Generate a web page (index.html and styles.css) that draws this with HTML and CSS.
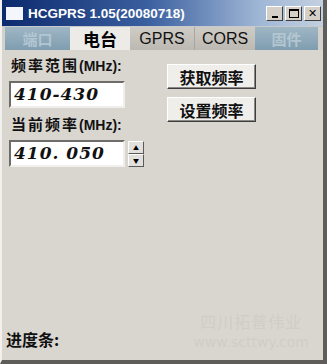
FILE: index.html
```html
<!DOCTYPE html>
<html>
<head>
<meta charset="utf-8">
<link rel="stylesheet" href="styles.css">
</head>
<body>
<div class="window">
  <div class="titlebar">
    <span class="appicon"></span>
    <span class="title">HCGPRS 1.05(20080718)</span>
    <div class="ctrls">
      <span class="cbtn"><span class="min"></span></span>
      <span class="cbtn"><span class="max"></span></span>
      <span class="cbtn close">✕</span>
    </div>
  </div>
  <div class="tabs">
    <span class="tab blue">端口</span>
    <span class="tab sel">电台</span>
    <span class="tab grey">GPRS</span>
    <span class="tab grey">CORS</span>
    <span class="tab blue">固件</span>
  </div>
  <div class="content">
    <div class="left">
      <div class="label">频率范围<span class="mhz">(MHz):</span></div>
      <div class="field">410-430</div>
      <div class="label l2">当前频率<span class="mhz">(MHz):</span></div>
      <div class="row">
        <div class="field">410. 050</div>
        <div class="spin">
          <span class="arr">▲</span>
          <span class="arr">▼</span>
        </div>
      </div>
    </div>
    <div class="right">
      <div class="btn">获取频率</div>
      <div class="btn">设置频率</div>
    </div>
  </div>
  <div class="bottom">
    <div class="progress">进度条:</div>
    <div class="wm">
      <div class="wm1">四川拓普伟业</div>
      <div class="wm2">www.scttwy.com</div>
    </div>
  </div>
</div>
</body>
</html>
```
FILE: styles.css
```css
* { box-sizing: border-box; }
html, body { margin: 0; padding: 0; }
body { width: 327px; height: 364px; overflow: hidden; background: #d8d5cf; font-family: "Noto Sans CJK SC", "Liberation Sans", sans-serif; }
.window { width: 327px; height: 364px; background: #d9d6d0; border-right: 4px solid #5e5d5a; border-bottom: 4px solid #5e5d5a; border-left: 2px solid #f2f1ee; display: flex; flex-direction: column; }
.titlebar { height: 27px; background: linear-gradient(90deg, #0c2a6e 0%, #3a5f9f 45%, #9fb7d6 80%, #c3d0e0 100%); display: flex; align-items: center; padding-left: 4px; padding-right: 2px; border-bottom: 1px solid #c7c9cc; }
.appicon { width: 17px; height: 13px; background: #f4f6fb; margin-right: 5px; margin-top: 1px; }
.title { color: #fff; font-family: "Liberation Sans", sans-serif; font-weight: bold; font-size: 13.5px; flex: 1; }
.ctrls { display: flex; gap: 2px; margin-top: 1px; }
.cbtn { width: 17px; height: 15px; background: #d4d0c8; border: 1px solid; border-color: #fff #404040 #404040 #fff; display: flex; align-items: center; justify-content: center; font-size: 11px; font-weight: bold; color: #000; }
.cbtn.close { font-family: "DejaVu Sans", sans-serif; font-size: 11px; }
.min { width: 6px; height: 2px; background: #000; margin-top: 7px; }
.max { width: 10px; height: 9px; border: 1px solid #000; border-top-width: 2px; }
.tabs { height: 23px; display: flex; padding-left: 3px; background: #d3d1cc; }
.tab { display: flex; align-items: center; justify-content: center; font-size: 14px; height: 23px; }
.tab:nth-child(1) { width: 65px; }
.tab:nth-child(2) { width: 60px; }
.tab:nth-child(3) { width: 64px; }
.tab:nth-child(4) { width: 61px; }
.tab:nth-child(5) { width: 63px; }
.tab.blue { background: linear-gradient(#9fb6c4, #7f9db0); color: #b3c6d2; font-weight: bold; font-size: 15px; }
.tab.sel { background: #ecebe8; color: #000; font-size: 17px; font-weight: bold; }
.tab.grey { background: linear-gradient(#cfccc6, #bcb9b3); color: #111; font-family: "Liberation Sans", sans-serif; font-size: 16px; }
.tab.grey + .tab.grey { border-left: 1px solid #a8a6a1; }
.content { display: flex; padding: 5px 0 0 7px; }
.left { width: 150px; display: flex; flex-direction: column; }
.label { font-size: 15px; font-weight: bold; color: #111; height: 20px; line-height: 20px; padding-left: 2px; letter-spacing: 2px; white-space: nowrap; }
.mhz { font-family: "Liberation Sans", sans-serif; font-size: 14px; font-weight: bold; letter-spacing: 0; }
.l2 { margin-top: 6px; }
.field { width: 116px; height: 27px; background: #fff; border: 2px solid; border-color: #6d6c69 #f0efec #f0efec #6d6c69; font-family: "DejaVu Serif", serif; font-style: italic; font-weight: bold; font-size: 17px; line-height: 22px; padding-left: 3px; margin-top: 6px; color: #111; letter-spacing: 1px; }
.row { display: flex; align-items: flex-start; }
.spin { display: flex; flex-direction: column; margin-left: 3px; margin-top: 7px; }
.arr { width: 16px; height: 13px; background: #e2e0dc; border: 1px solid; border-color: #fff #5a5a5a #5a5a5a #fff; font-size: 6px; display: flex; align-items: center; justify-content: center; color: #000; }
.right { display: flex; flex-direction: column; gap: 8px; margin-left: 8px; margin-top: 9px; }
.btn { width: 89px; height: 25px; background: #efeeeb; border: 1px solid; border-color: #fff #3e3e3e #3e3e3e #fff; box-shadow: inset -1px -1px 0 #8a8986; font-size: 16px; font-weight: bold; display: flex; align-items: center; justify-content: center; color: #111; }
.bottom { flex: 1; display: flex; align-items: flex-end; justify-content: space-between; padding: 0 14px 9px 4px; }
.progress { font-size: 16px; font-weight: bold; color: #111; }
.wm { color: #d0cdc8; text-align: center; margin-bottom: 0; display: flex; flex-direction: column; }
.wm1 { font-size: 16px; letter-spacing: 1px; line-height: 24px; }
.wm2 { font-family: "DejaVu Sans", sans-serif; font-size: 14px; line-height: 18px; }
```
